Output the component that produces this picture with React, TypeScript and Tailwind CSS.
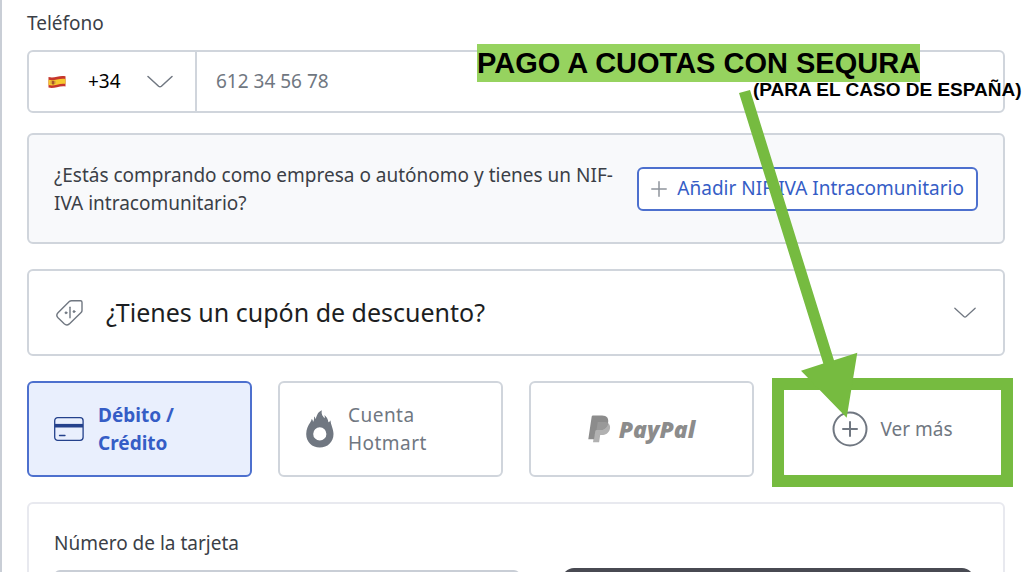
import type { ReactNode } from "react";

function ChevronDown({ className = "" }: { className?: string }) {
  return (
    <svg viewBox="0 0 26 14" fill="none" stroke="#707781" strokeWidth="1.500" strokeLinecap="round" strokeLinejoin="round" aria-hidden="true" className={`shrink-0 ${className}`}>
      <path d="M1 1.500 11.600 11.200Q13 12.400 14.400 11.200L25 1.500" />
    </svg>
  );
}

function SpainFlag() {
  return (
    <svg width="18" height="14" viewBox="0 0 18 14" aria-hidden="true">
      <path d="M.5 2C3.500 2.800 6 2.400 9 1.700S14.500.800 17.500 1.300V11.500C14.500 11 12 11.600 9 12.200S3.500 13.200.5 12.600Z" fill="#c6362c" />
      <path d="M.5 4.700C3.500 5.500 6 5.100 9 4.500S14.500 3.500 17.500 4V9C14.500 8.500 12 9 9 9.700S3.500 10.700.5 10.100Z" fill="#f6c92e" />
      <path d="M3.700 5.800h2.800v3.200q-1.400 1.200-2.800 0z" fill="#a8552c" />
      <path d="M3 6v3M7.200 5.800v3" stroke="#c98f4a" strokeWidth=".7" />
    </svg>
  );
}

function TagIcon() {
  return (
    <svg width="28" height="28" viewBox="0 0 28 28" fill="none" stroke="#707781" strokeWidth="1.400" strokeLinecap="round" strokeLinejoin="round" aria-hidden="true">
      <path d="M15.500 1.700H24.500Q26 1.700 26 3.200V11.500Q26 12.700 25.100 13.600L13.300 24.900Q10.700 27 8.200 24.800L2 18.800Q-.4 16.200 2 13.800L13.300 2.600Q14.200 1.700 15.500 1.700Z" />
      <path d="M14 8.200V18.800" />
      <circle cx="10" cy="13.800" r="1" fill="#707781" stroke="#707781" strokeWidth=".8" />
      <circle cx="18" cy="12.600" r="1" fill="#707781" stroke="#707781" strokeWidth=".8" />
    </svg>
  );
}

function CardIcon() {
  return (
    <svg width="30" height="24" viewBox="0 0 30 24" fill="none" stroke="#24418c" aria-hidden="true">
      <rect x=".7" y=".7" width="28.400" height="22.600" rx="3" strokeWidth="1.300" />
      <path d="M1 8.700H29" strokeWidth="3.600" />
      <path d="M5.500 18.500H11" strokeWidth="1.300" strokeLinecap="round" />
    </svg>
  );
}

function HotmartIcon() {
  return (
    <svg width="28" height="38" viewBox="0 0 28 38" fill="#707781" aria-hidden="true">
      <path fillRule="evenodd" d="M15.900.3C15 4 16.500 6.200 18.700 8.200C18.900 7 18.800 6 18.400 4.900C20.500 6.800 22 8.800 22.400 12.300C23.400 11.800 24 11.200 24.500 10.200C24.600 14.500 27.500 18.500 27.500 24C27.500 32 21.500 37.600 13.800 37.600S.2 32 .2 24C.2 19 2.200 15.500 4.200 12.600C5 11.300 5.500 10.300 5.700 8.800C6.600 9.800 7 10.800 7 12C8.200 10.500 8.200 8.300 8 6.500C9 7.300 9.400 8.200 9.600 9.200C11.200 4.300 12 2.200 15.900.3ZM13.800 17.300a6.600 6.600 0 1 0 0 13.200a6.600 6.600 0 1 0 0-13.200Z" />
    </svg>
  );
}

function PayPalMark() {
  return (
    <svg width="23" height="28" viewBox="0 0 23 28" aria-hidden="true">
      <path d="M9.500 7H17.500C21.300 8 22.800 10.700 21.800 14.200C20.800 18.200 17.500 20.100 13.700 20.100H12.200L11.100 27.200H5L7.300 12Z" fill="#b1b1b1" />
      <path d="M3.700 1.500Q3.900.5 5 .5H14C19 .5 21 3.500 20 8.200C19 12.900 15.500 15.100 11 15.100H8.600Q7.500 15.100 7.300 16.200L6 24.200H.3Z" fill="#8c8c8c" />
      <path d="M9.700 7H17.500Q19.200 7.300 20.200 8C19.200 12.800 15.600 15.100 11 15.100H8.500Z" fill="#999999" />
    </svg>
  );
}

function PlusCircle() {
  return (
    <svg width="36" height="36" viewBox="0 0 36 36" fill="none" stroke="#707781" strokeWidth="2" strokeLinecap="round" aria-hidden="true">
      <circle cx="18" cy="18" r="16.500" />
      <path d="M18 11V25M11 18H25" />
    </svg>
  );
}

function Method({ selected = false, className = "", children }: { selected?: boolean; className?: string; children: ReactNode }) {
  const tone = selected
    ? "border-[#4d70ce] bg-[#e9effd] font-bold text-[#355dc6]"
    : "border-[#d0d5dc] bg-white text-[#707781]";
  return (
    <button type="button" aria-pressed={selected} className={`flex h-24 w-full items-center rounded-md border-2 text-left text-[19px] leading-7 ${tone} ${className}`}>
      {children}
    </button>
  );
}

export default function App() {
  return (
    <main className="relative h-screen overflow-hidden border-l-2 border-[#c9ced6] bg-white pr-[18px] pl-[25px] font-['Noto_Sans',sans-serif] text-[19px] text-[#3b3f47]">
      <label htmlFor="phone" className="block pt-2 leading-[30px]">Teléfono</label>

      <div className="mt-3 flex h-[63px] rounded-md border-2 border-[#d0d5dc]">
        <div className="flex w-[168px] items-center border-r-2 border-[#d0d5dc] pl-[19px]">
          <SpainFlag />
          <select aria-label="Prefijo" className="ml-[22px] w-[59px] appearance-none bg-transparent text-black outline-none">
            <option>+34</option>
          </select>
          <ChevronDown className="w-[26px]" />
        </div>
        <input id="phone" type="tel" placeholder="612 34 56 78" className="min-w-0 flex-1 bg-transparent px-[19px] outline-none placeholder:text-[#707781]" />
      </div>

      <section className="mt-5 flex h-[111px] items-center justify-between gap-3 rounded-md border-2 border-[#d0d5dc] bg-[#f8f9fb] px-[25px]">
        <p className="leading-7">¿Estás comprando como empresa o autónomo y tienes un NIF-IVA intracomunitario?</p>
        <button type="button" className="flex h-11 shrink-0 items-center gap-[10px] rounded-md border-2 border-[#4d70ce] bg-white px-3 whitespace-nowrap text-[#355dc6]">
          <svg width="16" height="16" viewBox="0 0 16 16" stroke="#8f949c" strokeWidth="1.500" strokeLinecap="round" aria-hidden="true">
            <path d="M8 .8V15.200M.8 8H15.200" />
          </svg>
          Añadir NIF-IVA Intracomunitario
        </button>
      </section>

      <button type="button" aria-expanded="false" className="mt-[25px] flex h-[87px] w-full items-center rounded-md border-2 border-[#d0d5dc] px-[27px] text-left text-[25px] text-[#1c1e22]">
        <TagIcon />
        <span className="ml-[22px] flex-1">¿Tienes un cupón de descuento?</span>
        <ChevronDown className="w-[22px]" />
      </button>

      <div className="mt-[25px] grid grid-cols-4 gap-[26px]">
        <Method selected className="gap-[14px] pl-[25px]">
          <CardIcon />
          <span>Débito /<br />Crédito</span>
        </Method>
        <Method className="gap-[14px] pl-[26px] tracking-wide">
          <HotmartIcon />
          <span>Cuenta<br />Hotmart</span>
        </Method>
        <Method className="justify-center gap-2">
          <PayPalMark />
          <span className="font-['Open_Sans',sans-serif] text-[23px] font-extrabold text-[#8c8c8c] italic">PayPal</span>
        </Method>
        <div className="relative">
          <Method className="justify-center gap-3">
            <PlusCircle />
            Ver más
          </Method>
          <div className="pointer-events-none absolute -inset-x-2 -top-[3px] -bottom-[10px] border-12 border-[#76bb40]" />
        </div>
      </div>

      <section className="mt-[25px] grid grid-cols-[28fr_25fr] gap-[42px] rounded-md border-2 border-[#e8e9ef] px-[25px] pt-6 pb-8">
        <div>
          <label htmlFor="card" className="block leading-[30px]">Número de la tarjeta</label>
          <input id="card" inputMode="numeric" className="mt-3 h-[63px] w-full rounded-md border-2 border-[#c9ced6] px-5 outline-none" />
        </div>
        <div className="mt-10 mr-1 h-60 rounded-xl bg-[#484a52]" />
      </section>

      <svg className="pointer-events-none absolute top-[88px] left-[735px]" width="125" height="332" viewBox="737 88 125 332" fill="#76bb40" aria-hidden="true">
        <path d="M739 93 750 90 834 360.300 857.300 352.700 846.700 417.700 801 370.700 823.300 363.500Z" />
      </svg>
      <p className="pointer-events-none absolute top-11 left-[475px] bg-[#96d35f] font-['Liberation_Sans',Arial,sans-serif] text-[29px] leading-[38px] font-bold whitespace-nowrap text-black">PAGO A CUOTAS CON SEQURA</p>
      <p className="pointer-events-none absolute top-[78px] left-[751px] font-['Liberation_Sans',Arial,sans-serif] text-[19px] leading-6 font-bold whitespace-nowrap text-black">(PARA EL CASO DE ESPAÑA)</p>
    </main>
  );
}
